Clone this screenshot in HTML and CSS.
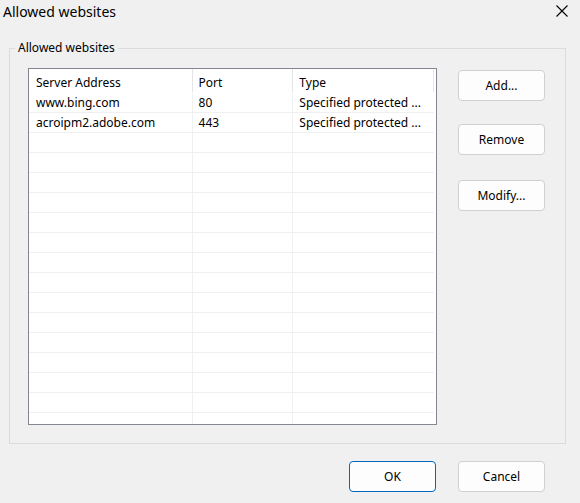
FILE: index.html
```html
<!DOCTYPE html>
<html>
<head>
<meta charset="utf-8">
<link rel="stylesheet" href="styles.css">
</head>
<body>
<div class="dialog">
  <div class="titlebar">
    <span class="title">Allowed websites</span>
    <svg class="close" width="12" height="12" viewBox="0 0 12 12"><path d="M0.5 0.5 L11.5 11.5 M11.5 0.5 L0.5 11.5" stroke="#000" stroke-width="1.1" fill="none"/></svg>
  </div>
  <fieldset class="group">
    <legend class="legend">Allowed websites</legend>
    <div class="group-body">
      <div class="list">
        <div class="row head">
          <div class="cell c1">Server Address</div>
          <div class="cell c2">Port</div>
          <div class="cell c3">Type</div>
        </div>
        <div class="rows">
          <div class="row"><div class="cell c1">www.bing.com</div><div class="cell c2">80</div><div class="cell c3">Specified protected ...</div></div>
          <div class="row"><div class="cell c1">acroipm2.adobe.com</div><div class="cell c2">443</div><div class="cell c3">Specified protected ...</div></div>
          <div class="row"><div class="cell c1"></div><div class="cell c2"></div><div class="cell c3"></div></div>
          <div class="row"><div class="cell c1"></div><div class="cell c2"></div><div class="cell c3"></div></div>
          <div class="row"><div class="cell c1"></div><div class="cell c2"></div><div class="cell c3"></div></div>
          <div class="row"><div class="cell c1"></div><div class="cell c2"></div><div class="cell c3"></div></div>
          <div class="row"><div class="cell c1"></div><div class="cell c2"></div><div class="cell c3"></div></div>
          <div class="row"><div class="cell c1"></div><div class="cell c2"></div><div class="cell c3"></div></div>
          <div class="row"><div class="cell c1"></div><div class="cell c2"></div><div class="cell c3"></div></div>
          <div class="row"><div class="cell c1"></div><div class="cell c2"></div><div class="cell c3"></div></div>
          <div class="row"><div class="cell c1"></div><div class="cell c2"></div><div class="cell c3"></div></div>
          <div class="row"><div class="cell c1"></div><div class="cell c2"></div><div class="cell c3"></div></div>
          <div class="row"><div class="cell c1"></div><div class="cell c2"></div><div class="cell c3"></div></div>
          <div class="row"><div class="cell c1"></div><div class="cell c2"></div><div class="cell c3"></div></div>
          <div class="row"><div class="cell c1"></div><div class="cell c2"></div><div class="cell c3"></div></div>
          <div class="row"><div class="cell c1"></div><div class="cell c2"></div><div class="cell c3"></div></div>
          <div class="row"><div class="cell c1"></div><div class="cell c2"></div><div class="cell c3"></div></div>
          <div class="row"><div class="cell c1"></div><div class="cell c2"></div><div class="cell c3"></div></div>
        </div>
      </div>
      <div class="side">
        <button class="btn">Add...</button>
        <button class="btn btn-remove">Remove</button>
        <button class="btn btn-modify">Modify...</button>
      </div>
    </div>
  </fieldset>
  <div class="footer">
    <button class="btn btn-default">OK</button>
    <button class="btn">Cancel</button>
  </div>
</div>
</body>
</html>
```

FILE: styles.css
```css
html, body {
  margin: 0;
  padding: 0;
  background: #f0f0f0;
}
body {
  font-family: "Noto Sans", "DejaVu Sans", sans-serif;
  font-size: 12px;
  color: #000;
}
.dialog {
  width: 580px;
  height: 503px;
  display: flex;
  flex-direction: column;
  overflow: hidden;
}
.titlebar {
  height: 24px;
  display: flex;
  align-items: center;
  justify-content: space-between;
  padding: 0 12px 0 3px;
}
.title {
  font-size: 14px;
  line-height: 24px;
}
.close {
  display: block;
  margin-top: -2px;
}
.group {
  margin: 16px 0 0 9px;
  width: 557px;
  height: 404px;
  box-sizing: border-box;
  border: 1px solid #dcdcdc;
  padding: 0;
  min-width: 0;
}
.legend {
  margin-left: 5px;
  padding: 0 3px 0 3px;
  line-height: 16px;
  font-size: 12px;
}
.group-body {
  display: flex;
  gap: 21px;
  padding: 12px 0 0 18px;
}
.list {
  width: 409px;
  height: 357px;
  box-sizing: border-box;
  border: 1px solid #828790;
  background: #fff;
  overflow: hidden;
  padding-right: 2px;
}
.row {
  display: flex;
  height: 20px;
  box-sizing: border-box;
  border-bottom: 1px solid #f0f0f0;
}
.row.head {
  height: 24px;
  border-bottom: 1px solid #fff;
}
.cell {
  box-sizing: border-box;
  height: 100%;
  display: flex;
  align-items: center;
  white-space: nowrap;
  overflow: hidden;
  border-right: 1px solid #f0f0f0;
}
.head .cell {
  border-right: 1px solid #e5e5e5;
  height: 23px;
  padding-top: 4px;
}
.c1 { width: 164px; padding-left: 7px; }
.c2 { width: 101px; padding-left: 6px; }
.c3 { width: 141px; padding-left: 6px; }
.rows .c3 { border-right: none; }
.side {
  display: flex;
  flex-direction: column;
  padding-top: 2px;
}
.btn {
  width: 87px;
  height: 31px;
  box-sizing: border-box;
  background: #fdfdfd;
  border: 1px solid #d0d0d0;
  border-radius: 4px;
  font-family: inherit;
  font-size: 12px;
  color: #000;
  padding: 0;
}
.btn-remove { margin-top: 23px; }
.btn-modify { margin-top: 25px; }
.footer {
  display: flex;
  justify-content: flex-end;
  gap: 22px;
  padding: 17px 35px 0 0;
}
.btn-default {
  border-color: #0067c0;
}
```
